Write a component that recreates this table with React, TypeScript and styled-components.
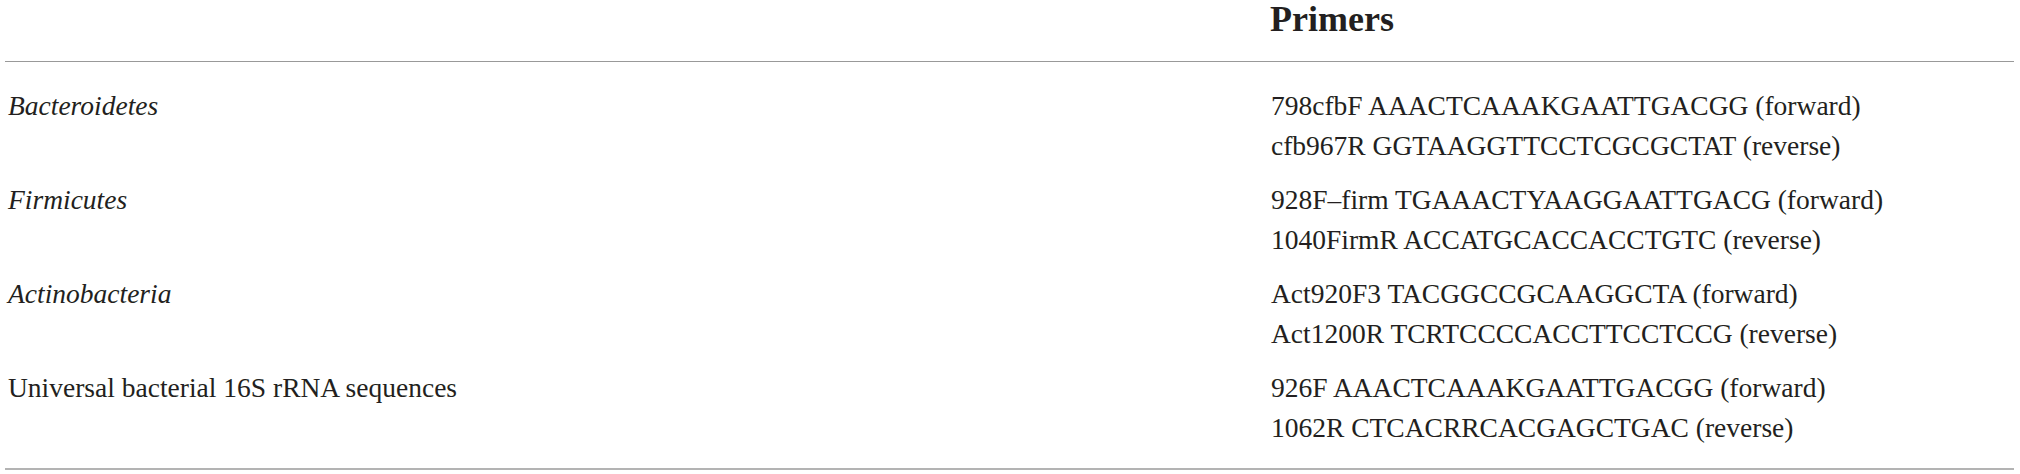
import React from "react";
import styled, { createGlobalStyle } from "styled-components";

const Global = createGlobalStyle`
  html, body { margin: 0; padding: 0; background: #ffffff; }
  body { font-family: "Liberation Serif", "Times New Roman", serif; color: #231f20; }
`;

const Table = styled.table`
  margin-left: 5px;
  width: 2009px;
  border-collapse: collapse;
  font-size: 27.5px;
  line-height: 40px;
`;

const HeadCell = styled.th`
  text-align: left;
  font-weight: bold;
  font-size: 36px;
  line-height: 38px;
  padding: 0 0 23px 0;
  border-bottom: 1px solid #999999;
  vertical-align: top;
`;

const Row = styled.tr<{ $first?: boolean; $last?: boolean }>`
  & > td {
    padding-top: ${(p) => (p.$first ? 24 : 7)}px;
    padding-bottom: ${(p) => (p.$last ? 20 : 7)}px;
    border-bottom: ${(p) => (p.$last ? "2px solid #b3b3b3" : "none")};
  }
`;

const NameCell = styled.td<{ $italic?: boolean }>`
  width: 1261px;
  padding-left: 3px;
  font-style: ${(p) => (p.$italic ? "italic" : "normal")};
  vertical-align: top;
`;

const PrimerCell = styled.td`
  vertical-align: top;
`;

const Line = styled.div`
  white-space: nowrap;
`;

type Item = { name: string; italic: boolean; primers: string[] };

const data: Item[] = [
  {
    name: "Bacteroidetes",
    italic: true,
    primers: ["798cfbF AAACTCAAAKGAATTGACGG (forward)", "cfb967R GGTAAGGTTCCTCGCGCTAT (reverse)"],
  },
  {
    name: "Firmicutes",
    italic: true,
    primers: ["928F\u2013firm TGAAACTYAAGGAATTGACG (forward)", "1040FirmR ACCATGCACCACCTGTC (reverse)"],
  },
  {
    name: "Actinobacteria",
    italic: true,
    primers: ["Act920F3 TACGGCCGCAAGGCTA (forward)", "Act1200R TCRTCCCCACCTTCCTCCG (reverse)"],
  },
  {
    name: "Universal bacterial 16S rRNA sequences",
    italic: false,
    primers: ["926F AAACTCAAAKGAATTGACGG (forward)", "1062R CTCACRRCACGAGCTGAC (reverse)"],
  },
];

export default function App() {
  return (
    <>
      <Global />
      <Table>
        <thead>
          <tr>
            <HeadCell />
            <HeadCell>Primers</HeadCell>
          </tr>
        </thead>
        <tbody>
          {data.map((d, i) => (
            <Row key={d.name} $first={i === 0} $last={i === data.length - 1}>
              <NameCell $italic={d.italic}>{d.name}</NameCell>
              <PrimerCell>
                {d.primers.map((p) => (
                  <Line key={p}>{p}</Line>
                ))}
              </PrimerCell>
            </Row>
          ))}
        </tbody>
      </Table>
    </>
  );
}
